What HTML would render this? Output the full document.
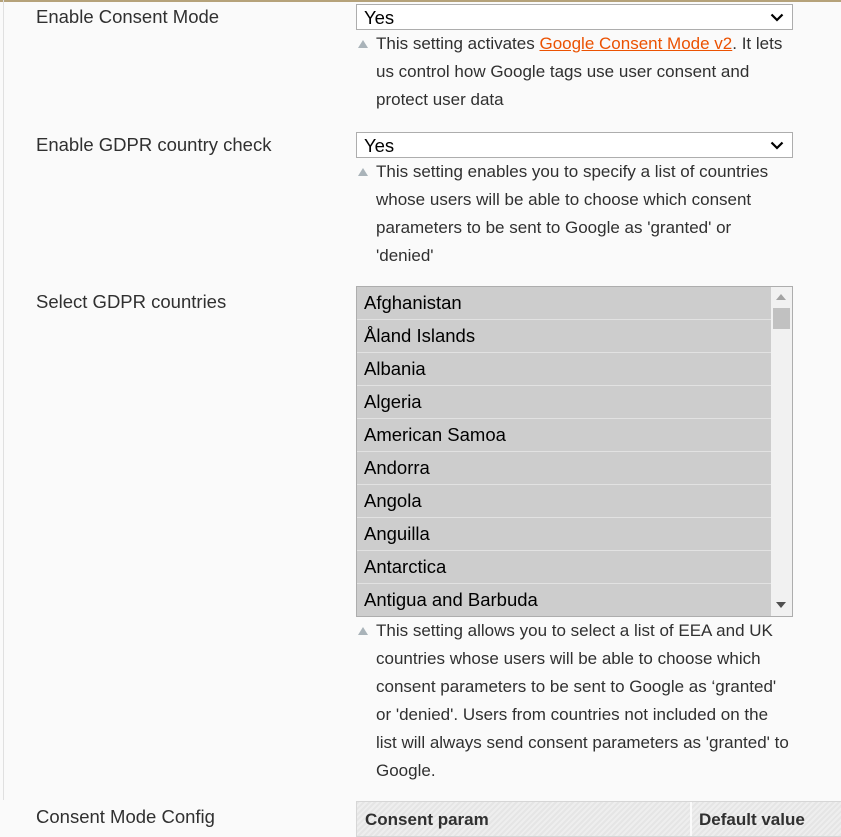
<!DOCTYPE html>
<html><head><meta charset="utf-8"><style>
html,body{margin:0;padding:0;}
body{width:841px;height:835px;overflow:hidden;background:#fafafa;font-family:"Liberation Sans",Arial,sans-serif;color:#303030;font-size:17px;position:relative;}
.topline{position:absolute;left:0;top:0;width:841px;height:2px;background:#b5a27a;}
.leftline{position:absolute;left:3px;top:0;width:1px;height:800px;background:#e0e0e0;}
.lbl{position:absolute;left:36px;font-size:18.5px;}
.sel{position:absolute;left:356px;width:435px;height:24px;border:1px solid #adadad;background:#fff;box-sizing:content-box;}
.sel span{position:absolute;left:7px;top:2px;color:#000;font-size:18.5px;}
.sel svg{position:absolute;right:8px;top:8px;}
.note{position:absolute;left:376px;width:420px;line-height:28px;}
.tri{position:absolute;left:358px;width:0;height:0;border-left:5px solid transparent;border-right:5px solid transparent;border-bottom:8px solid #a9b3b9;}
a{color:#eb5202;}
.list{position:absolute;left:356px;top:286px;width:435px;height:329px;border:1px solid #adadad;background:#cdcdcd;overflow:hidden;}
.list .it{height:32px;border-bottom:1px solid #e2e2e2;padding-left:7px;line-height:31px;color:#000;width:407px;font-size:18.5px;}
.sb{position:absolute;right:0;top:0;width:21px;height:329px;background:#f1f1f1;}
.thumb{position:absolute;left:2px;top:21px;width:17px;height:21px;background:#c1c1c1;}
.thead{position:absolute;left:356px;top:801px;width:485px;height:34px;border:1px solid #d6d6d6;background:repeating-linear-gradient(135deg,#e5e5e5 0 2px,#eeeeee 2px 4px);font-weight:bold;}
</style></head><body>
<div class="topline"></div><div class="leftline"></div>
<div class="lbl" style="top:6px">Enable Consent Mode</div>
<div class="sel" style="top:4px"><span>Yes</span><svg width="14" height="9" viewBox="0 0 14 9"><path d="M1.5 1.5 L7 7 L12.5 1.5" stroke="#000" stroke-width="2.2" fill="none"/></svg></div>
<div class="tri" style="top:40px"></div>
<div class="note" style="top:30px">This setting activates <a href="#">Google Consent Mode v2</a>. It lets us control how Google tags use user consent and protect user data</div>

<div class="lbl" style="top:134px">Enable GDPR country check</div>
<div class="sel" style="top:132px"><span>Yes</span><svg width="14" height="9" viewBox="0 0 14 9"><path d="M1.5 1.5 L7 7 L12.5 1.5" stroke="#000" stroke-width="2.2" fill="none"/></svg></div>
<div class="tri" style="top:168px"></div>
<div class="note" style="top:158px;width:400px">This setting enables you to specify a list of countries whose users will be able to choose which consent parameters to be sent to Google as 'granted' or 'denied'</div>

<div class="lbl" style="top:291px">Select GDPR countries</div>
<div class="list">
<div class="it">Afghanistan</div><div class="it">Åland Islands</div><div class="it">Albania</div><div class="it">Algeria</div><div class="it">American Samoa</div><div class="it">Andorra</div><div class="it">Angola</div><div class="it">Anguilla</div><div class="it">Antarctica</div><div class="it">Antigua and Barbuda</div>
<div class="sb"><svg style="position:absolute;left:5px;top:7px" width="10" height="6"><path d="M0 6L5 0L10 6Z" fill="#a3a3a3"/></svg><div class="thumb"></div><svg style="position:absolute;left:5px;top:315px" width="10" height="6"><path d="M0 0L5 6L10 0Z" fill="#505050"/></svg></div>
</div>
<div class="tri" style="top:627px"></div>
<div class="note" style="top:617px;width:460px;white-space:nowrap">This setting allows you to select a list of EEA and UK<br>countries whose users will be able to choose which<br>consent parameters to be sent to Google as ‘granted'<br>or 'denied'. Users from countries not included on the<br>list will always send consent parameters as 'granted' to<br>Google.</div>

<div class="lbl" style="top:806px">Consent Mode Config</div>
<div class="thead"><span style="position:absolute;left:8px;top:8px">Consent param</span><div style="position:absolute;left:333px;top:0;width:2px;height:34px;background:#fafafa"></div><span style="position:absolute;left:342px;top:8px">Default value</span></div>
</body></html>
